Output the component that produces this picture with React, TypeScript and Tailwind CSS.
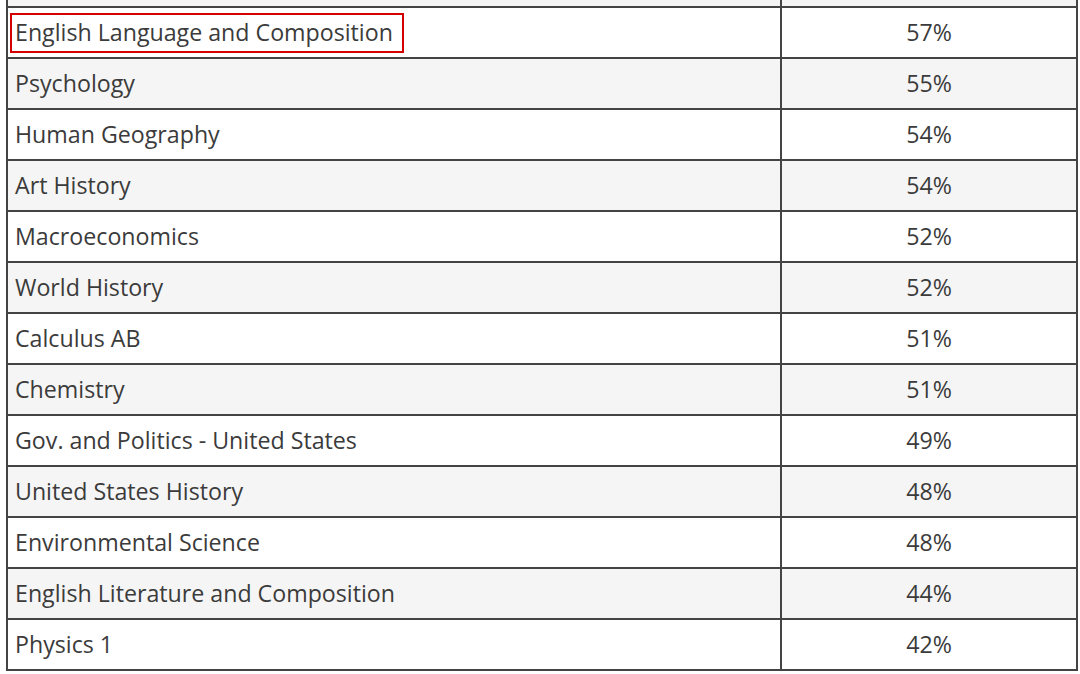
const rows: [string, string][] = [
  ['English Language and Composition', '57%'],
  ['Psychology', '55%'],
  ['Human Geography', '54%'],
  ['Art History', '54%'],
  ['Macroeconomics', '52%'],
  ['World History', '52%'],
  ['Calculus AB', '51%'],
  ['Chemistry', '51%'],
  ['Gov. and Politics - United States', '49%'],
  ['United States History', '48%'],
  ['Environmental Science', '48%'],
  ['English Literature and Composition', '44%'],
  ['Physics 1', '42%'],
];

export default function App() {
  return (
    <div className="w-[1080px] h-[674px] bg-white overflow-hidden font-['Open_Sans',sans-serif] text-[23.2px] text-[#3b3b3b]">
      <div className="ml-[6px] w-[1072px] border-x-2 border-[#444]">
        {/* tail of the previous row */}
        <div className="flex h-[8px] border-b-2 border-[#444] bg-[#f5f5f5]">
          <div className="w-[772px]" />
          <div className="flex-1 border-l-2 border-[#444]" />
        </div>
        {rows.map(([subject, pct], i) => (
          <div
            key={subject}
            className={`flex h-[51px] border-b-2 border-[#444] ${i % 2 === 0 ? 'bg-white' : 'bg-[#f5f5f5]'}`}
          >
            <div className={`w-[772px] flex items-center ${i === 0 ? 'pl-[2px]' : 'pl-[7px]'}`}>
              {i === 0 ? (
                <span className="border-2 border-[#d40000] pl-[3px] pr-[9px] h-[40px] flex items-center">{subject}</span>
              ) : (
                subject
              )}
            </div>
            <div className="flex-1 border-l-2 border-[#444] flex items-center justify-center">{pct}</div>
          </div>
        ))}
      </div>
    </div>
  );
}
